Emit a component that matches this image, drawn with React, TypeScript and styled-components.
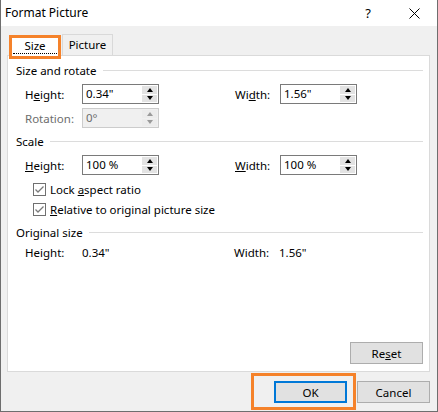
import { FC, ReactNode } from 'react';
import styled, { createGlobalStyle } from 'styled-components';

const GlobalStyle = createGlobalStyle`
  body {
    margin: 0;
    font-family: 'Noto Sans', 'Open Sans', sans-serif;
    font-size: 11.5px;
    color: #000;
  }
`;

const Spinner: FC<{ value: string; disabled?: boolean }> = ({ value, disabled }) => (
  <SpinBox disabled={disabled}>
    <SpinValue disabled={disabled}>{value}</SpinValue>
    <SpinButtons>
      <SpinButton disabled={disabled}>
        <Arrow up disabled={disabled} />
      </SpinButton>
      <SpinButton disabled={disabled}>
        <Arrow disabled={disabled} />
      </SpinButton>
    </SpinButtons>
  </SpinBox>
);

const Check: FC<{ children: ReactNode }> = ({ children }) => (
  <CheckRow>
    <CheckBox>
      <svg width="11" height="11" viewBox="0 0 11 11">
        <polyline points="1.5,5.5 4,8 9.5,2.5" fill="none" stroke="#7a7a7a" strokeWidth="1.3" />
      </svg>
    </CheckBox>
    <span>{children}</span>
  </CheckRow>
);

const App: FC = () => {
  return (
    <Window>
      <GlobalStyle />
      <TitleBar>
        <Title>Format Picture</Title>
        <TitleButton>?</TitleButton>
        <TitleButton>
          <svg width="11" height="11" viewBox="0 0 11 11">
            <path d="M0.5 0.5 L10.5 10.5 M10.5 0.5 L0.5 10.5" stroke="#000" strokeWidth="1" />
          </svg>
        </TitleButton>
      </TitleBar>
      <Body>
        <Tabs>
          <SizeTab>
            <FocusText>Size</FocusText>
          </SizeTab>
          <Tab>Picture</Tab>
        </Tabs>
        <Panel>
          <SectionHeader>Size and rotate</SectionHeader>
          <FieldRow>
            <Label>
              H<u>e</u>ight:
            </Label>
            <Spinner value={'0.34"'} />
            <Gap />
            <Label narrow>
              Wi<u>d</u>th:
            </Label>
            <Spinner value={'1.56"'} />
          </FieldRow>
          <FieldRow>
            <Label disabled>Rotation:</Label>
            <Spinner value="0°" disabled />
          </FieldRow>
          <SectionHeader>Scale</SectionHeader>
          <FieldRow>
            <Label>
              <u>H</u>eight:
            </Label>
            <Spinner value="100 %" />
            <Gap />
            <Label narrow>
              <u>W</u>idth:
            </Label>
            <Spinner value="100 %" />
          </FieldRow>
          <Checks>
            <Check>
              Lock <u>a</u>spect ratio
            </Check>
            <Check>
              <u>R</u>elative to original picture size
            </Check>
          </Checks>
          <SectionHeader>Original size</SectionHeader>
          <InfoRow>
            <Label>Height:</Label>
            <InfoValue>0.34"</InfoValue>
            <Label narrow>Width:</Label>
            <span>1.56"</span>
          </InfoRow>
          <PanelFooter>
            <Button>
              Re<u>s</u>et
            </Button>
          </PanelFooter>
        </Panel>
        <Footer>
          <Button primary highlight>
            OK
          </Button>
          <Button>Cancel</Button>
        </Footer>
      </Body>
    </Window>
  );
};

const Window = styled.div`
  width: 438px;
  height: 412px;
  box-sizing: border-box;
  border: 1px solid #6e6e6e;
  border-top: none;
  display: flex;
  flex-direction: column;
  background: #f0f0f0;
`;
const TitleBar = styled.div`
  height: 26px;
  flex-shrink: 0;
  display: flex;
  align-items: center;
  background: #fff;
  padding-left: 4px;
  font-size: 12px;
`;
const Title = styled.div`
  flex: 1;
  padding-bottom: 2px;
`;
const TitleButton = styled.div`
  width: 46px;
  height: 26px;
  display: flex;
  align-items: center;
  justify-content: center;
  font-size: 13px;
`;
const Body = styled.div`
  flex: 1;
  display: flex;
  flex-direction: column;
  padding: 8px 7px 0 6px;
`;
const Tabs = styled.div`
  display: flex;
  align-items: flex-end;
  height: 21px;
  padding-left: 2px;
`;
const SizeTab = styled.div`
  position: relative;
  z-index: 1;
  box-sizing: border-box;
  width: 52px;
  height: 24px;
  margin-bottom: -4px;
  border: 3px solid #f5822a;
  background: #fff;
  display: flex;
  justify-content: center;
  padding: 0 1px;
`;
const FocusText = styled.div`
  flex: 1;
  text-align: center;
  line-height: 15px;
  border-bottom: 1px dotted #000;
  height: 15px;
`;
const Tab = styled.div`
  box-sizing: border-box;
  width: 51px;
  height: 21px;
  margin-left: 1px;
  border: 1px solid #d9d9d9;
  border-bottom: none;
  text-align: center;
  line-height: 19px;
`;
const Panel = styled.div`
  flex: 1;
  display: flex;
  flex-direction: column;
  background: #fff;
  border: 1px solid #dadada;
  padding: 6px 6px 7px 8px;
`;
const SectionHeader = styled.div`
  display: flex;
  align-items: center;
  gap: 6px;
  height: 16px;
  &:not(:first-child) {
    margin-top: 5px;
  }
  &::after {
    content: '';
    flex: 1;
    height: 1px;
    background: #dcdcdc;
  }
`;
const FieldRow = styled.div`
  display: flex;
  align-items: center;
  margin: 6px 0 0 9px;
  & + & {
    margin-top: 4px;
  }
`;
const Label = styled.span<{ disabled?: boolean; narrow?: boolean }>`
  width: ${(p) => (p.narrow ? 45 : 57)}px;
  flex-shrink: 0;
  color: ${(p) => (p.disabled ? '#6d6d6d' : '#000')};
`;
const Gap = styled.div`
  width: 76px;
`;
const SpinBox = styled.div<{ disabled?: boolean }>`
  box-sizing: border-box;
  width: 77px;
  height: 20px;
  border: 1px solid ${(p) => (p.disabled ? '#cccccc' : '#7a7a7a')};
  background: ${(p) => (p.disabled ? '#f0f0f0' : '#fff')};
  display: flex;
`;
const SpinValue = styled.div<{ disabled?: boolean }>`
  flex: 1;
  padding-left: 3px;
  line-height: 18px;
  color: ${(p) => (p.disabled ? '#6d6d6d' : '#000')};
`;
const SpinButtons = styled.div`
  width: 15px;
  display: flex;
  flex-direction: column;
  gap: 1px;
  padding: 1px 1px 1px 0;
`;
const SpinButton = styled.div<{ disabled?: boolean }>`
  flex: 1;
  background: ${(p) => (p.disabled ? '#ececec' : '#e3e3e3')};
  display: flex;
  align-items: center;
  justify-content: center;
`;
const Arrow = styled.div<{ up?: boolean; disabled?: boolean }>`
  width: 0;
  height: 0;
  border-left: 3.5px solid transparent;
  border-right: 3.5px solid transparent;
  ${(p) => (p.up ? 'border-bottom' : 'border-top')}: 4px solid ${(p) => (p.disabled ? '#9a9a9a' : '#000')};
`;
const Checks = styled.div`
  display: flex;
  flex-direction: column;
  margin: 4px 0 0 17px;
`;
const CheckRow = styled.div`
  display: flex;
  align-items: center;
  height: 20px;
  gap: 4px;
`;
const CheckBox = styled.div`
  box-sizing: border-box;
  width: 13px;
  height: 13px;
  border: 1px solid #707070;
  display: flex;
  align-items: center;
  justify-content: center;
`;
const InfoRow = styled.div`
  display: flex;
  align-items: center;
  height: 18px;
  margin: 3px 0 0 9px;
`;
const InfoValue = styled.span`
  width: 152px;
`;
const PanelFooter = styled.div`
  flex: 1;
  display: flex;
  justify-content: flex-end;
  align-items: flex-end;
`;
const Button = styled.div<{ primary?: boolean; highlight?: boolean }>`
  position: relative;
  box-sizing: border-box;
  width: 73px;
  height: 22px;
  display: flex;
  align-items: center;
  justify-content: center;
  background: #e1e1e1;
  border: ${(p) => (p.primary ? '2px solid #0078d7' : '1px solid #adadad')};
  ${(p) =>
    p.highlight &&
    `
    &::after {
      content: '';
      position: absolute;
      left: -25px;
      top: -10px;
      width: 105px;
      height: 37px;
      box-sizing: border-box;
      border: 3px solid #f5822a;
    }
  `}
`;
const Footer = styled.div`
  height: 39px;
  flex-shrink: 0;
  display: flex;
  justify-content: flex-end;
  gap: 10px;
  padding-top: 9px;
  box-sizing: border-box;
`;

export default App;
